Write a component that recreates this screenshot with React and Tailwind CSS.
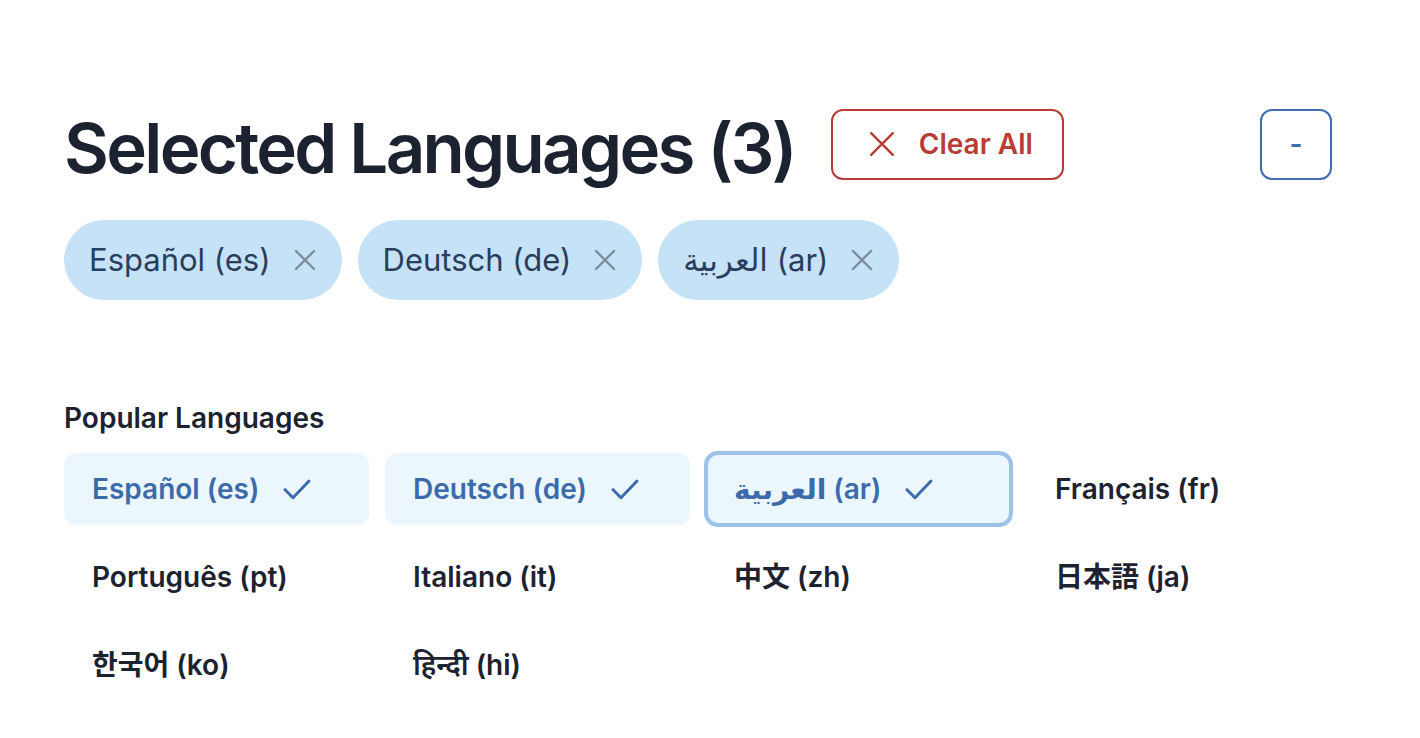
import React from "react";

const font = { fontFamily: "Inter, 'Noto Sans', 'DejaVu Sans', 'Noto Sans CJK KR', sans-serif" };

function XIcon({ className }) {
  return (
    <svg viewBox="0 0 24 24" fill="none" stroke="currentColor" strokeLinecap="round" className={className}>
      <path d="M2 2L22 22M22 2L2 22" />
    </svg>
  );
}

function SmallX({ className }) {
  return (
    <svg viewBox="0 0 24 24" fill="none" stroke="currentColor" strokeLinecap="round" className={className}>
      <path d="M3 3L21 21M21 3L3 21" />
    </svg>
  );
}

function Check({ className }) {
  return (
    <svg viewBox="0 0 24 24" fill="none" stroke="currentColor" strokeLinecap="round" strokeLinejoin="round" className={className}>
      <path d="M3 12.5L9 18.5L21 6" />
    </svg>
  );
}

const selected = ["Español (es)", "Deutsch (de)", "العربية (ar)"];

const popular = [
  { label: "Español (es)", sel: true },
  { label: "Deutsch (de)", sel: true },
  { label: "العربية (ar)", sel: true, focus: true },
  { label: "Français (fr)" },
  { label: "Português (pt)" },
  { label: "Italiano (it)" },
  { label: "中文 (zh)" },
  { label: "日本語 (ja)" },
  { label: "한국어 (ko)" },
  { label: "हिन्दी (hi)" },
];

export default function App() {
  return (
    <div className="min-h-screen bg-white" style={font}>
      <div className="w-[1268px] ml-16 pt-[108px]">
        <div className="flex items-center justify-between h-[72px]">
          <div className="flex items-center gap-9">
            <h1 className="text-[69px] leading-none font-semibold tracking-[-2.7px] text-[#1d2230] pt-2">
              Selected Languages (3)
            </h1>
            <button className="flex items-center gap-[24px] h-[71px] pl-[36px] pr-[29px] border-2 border-[#b83c35] rounded-[12px] text-[#b83c35] text-[28px] font-semibold">
              <XIcon className="w-[26px] h-[26px] stroke-[2.2]" />
              <span>Clear All</span>
            </button>
          </div>
          <button className="w-[72px] h-[71px] border-2 border-[#3d6cb0] rounded-[12px] text-[#3d6cb0] text-[28px] font-semibold flex items-center justify-center">
            -
          </button>
        </div>

        <div className="flex gap-4 mt-[40px]">
          {selected.map((s) => (
            <div key={s} className="flex items-center gap-[22px] h-[80px] pl-[25px] pr-[25px] rounded-full bg-[#c6e2f6] text-[#2b3d5c] text-[31px]">
              <span>{s}</span>
              <SmallX className="w-[24px] h-[24px] stroke-[2.4] text-[#7d8c9c]" />
            </div>
          ))}
        </div>

        <h2 className="mt-[98px] text-[28px] leading-[40px] font-semibold text-[#1d2230]">Popular Languages</h2>

        <div className="grid grid-cols-4 gap-4 mt-[15px]">
          {popular.map((p) => (
            <div
              key={p.label}
              className={
                p.sel
                  ? p.focus
                    ? "flex items-center gap-[22px] h-[72px] pl-[28px] rounded-[12px] bg-[#ebf6fd] text-[#3d6aab] text-[28px] font-semibold outline-4 outline-[#9dc2e8] -outline-offset-2"
                    : "flex items-center gap-[22px] h-[72px] pl-[28px] rounded-[12px] bg-[#ebf6fd] text-[#3d6aab] text-[28px] font-semibold"
                  : "flex items-center h-[72px] pl-[28px] text-[#1d2230] text-[28px] font-semibold"
              }
            >
              <span>{p.label}</span>
              {p.sel && <Check className="w-[32px] h-[32px] stroke-[2.2]" />}
            </div>
          ))}
        </div>
      </div>
    </div>
  );
}
